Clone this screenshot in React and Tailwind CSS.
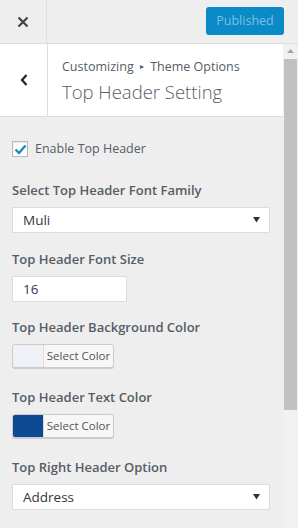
const font = { fontFamily: '"Open Sans", "Noto Sans", sans-serif' }

function ColorPicker({ swatch }) {
  return (
    <div className="flex h-[24px] w-[102px] rounded-[3px] border border-[#ccc] bg-[#f7f7f7] shadow-[0_1px_0_#ccc] overflow-hidden">
      <span className="w-[31px] border-r border-[#ddd]" style={{ background: swatch }} />
      <span className="flex-1 flex items-center justify-center text-[11.5px] text-[#555]">Select Color</span>
    </div>
  )
}

function Select({ value }) {
  return (
    <div className="flex items-center justify-between h-[26px] w-[258px] border border-[#ddd] bg-white pl-[10px] pr-[9px] text-[13.5px] text-[#32373c]">
      <span>{value}</span>
      <svg width="7" height="7" viewBox="0 0 7 7"><path d="M0 1h7L3.5 6.5z" fill="#333" /></svg>
    </div>
  )
}

function Label({ children }) {
  return <div className="text-[13px] font-semibold text-[#555d66] leading-[20px] mb-[7px]">{children}</div>
}

export default function App() {
  return (
    <div className="w-[298px] h-[528px] flex flex-col overflow-hidden bg-[#eee]" style={font}>
      <div className="h-[44px] flex border-b border-[#ddd] shrink-0">
        <div className="w-[47px] border-r border-[#ddd] flex items-center justify-center">
          <svg width="12" height="12" viewBox="0 0 12 12">
            <path d="M1.5 1.5l9 9M10.5 1.5l-9 9" stroke="#444" strokeWidth="2.2" />
          </svg>
        </div>
        <div className="flex-1 flex items-start justify-end pt-[7px] pr-[14px]">
          <div className="h-[28px] w-[78px] rounded-[3px] bg-[#0a8ac6] flex items-center justify-center text-[12.5px] text-[#7ec0e1]">
            Published
          </div>
        </div>
      </div>

      <div className="flex flex-1 min-h-0">
        <div className="flex-1 flex flex-col">
          <div className="h-[73px] bg-white border-b border-[#ddd] flex shrink-0">
            <div className="w-[48px] border-r border-[#ddd] flex items-center justify-center">
              <svg width="8" height="12" viewBox="0 0 8 12">
                <path d="M6.5 1L2 6l4.5 5" stroke="#222" strokeWidth="2.2" fill="none" />
              </svg>
            </div>
            <div className="flex-1 pl-[14px] pt-[13px]">
              <div className="text-[12.5px] text-[#555d66] leading-[18px]">
                Customizing <span className="text-[8px] align-[2px] mx-[3px]">▸</span> Theme Options
              </div>
              <div className="text-[18.5px] font-light text-[#555d66] leading-[28px] mt-[2px]">Top Header Setting</div>
            </div>
          </div>

          <div className="px-[12px] pt-[23px]">
            <div className="flex items-center gap-[7px] mb-[21px]">
              <span className="w-[16px] h-[16px] border border-[#b4b9be] bg-white flex items-center justify-center shadow-[inset_0_1px_2px_rgba(0,0,0,0.1)]">
                <svg width="13" height="11" viewBox="0 0 13 11">
                  <path d="M1.5 5.5l3.5 3.5 6.5-7.5" stroke="#1e8cbe" strokeWidth="2.4" fill="none" />
                </svg>
              </span>
              <span className="text-[12.5px] text-[#555d66]">Enable Top Header</span>
            </div>

            <Label>Select Top Header Font Family</Label>
            <Select value="Muli" />

            <div className="mt-[16px]">
              <Label>Top Header Font Size</Label>
              <div className="h-[26px] w-[115px] border border-[#ddd] bg-white flex items-center pl-[10px] text-[13.5px] text-[#32373c]">16</div>
            </div>

            <div className="mt-[15px]">
              <Label>Top Header Background Color</Label>
              <ColorPicker swatch="#eef2f6" />
            </div>

            <div className="mt-[19px]">
              <Label>Top Header Text Color</Label>
              <ColorPicker swatch="#0d4a91" />
            </div>

            <div className="mt-[19px]">
              <Label>Top Right Header Option</Label>
              <Select value="Address" />
            </div>
          </div>
        </div>

        <div className="w-[15px] bg-[#f1f1f1] flex flex-col items-center">
          <svg width="15" height="15" viewBox="0 0 15 15" className="shrink-0">
            <path d="M4 9h7L7.5 5z" fill="#a3a3a3" />
          </svg>
          <div className="w-[13px] h-[351px] bg-[#c1c1c1]" />
        </div>
      </div>
    </div>
  )
}
